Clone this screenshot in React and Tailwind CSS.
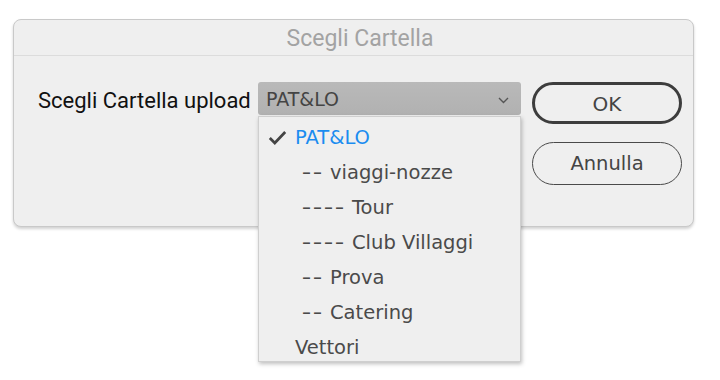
import React from "react";

const items = [
  { dash: "", text: "PAT&LO", selected: true },
  { dash: "--", text: "viaggi-nozze" },
  { dash: "----", text: "Tour" },
  { dash: "----", text: "Club Villaggi" },
  { dash: "--", text: "Prova" },
  { dash: "--", text: "Catering" },
  { dash: "", text: "Vettori" },
];

const lucida = { fontFamily: '"DejaVu Sans", "Liberation Sans", sans-serif' };
const myriad = { fontFamily: 'Roboto, "Liberation Sans", sans-serif' };

export default function App() {
  return (
    <div className="w-[720px] h-[380px] bg-white pt-[19px] pl-[13px] overflow-hidden">
      <div className="w-[681px] h-[208px] rounded-[8px] border border-[#c9c9c9] bg-[#efefef] shadow-[0_2px_3px_rgba(0,0,0,0.18)] flex flex-col">
        <div
          className="h-[36px] border-b border-[#dcdcdc] flex items-center justify-center pl-[13px] pt-[4px] text-[23px] text-[#a3a3a3]"
          style={myriad}
        >
          Scegli Cartella
        </div>
        <div className="flex items-start pt-[26px] pl-[24px]">
          <div
            className="h-[33px] flex items-center pt-[3px] text-[22px] text-[#111] w-[220px] whitespace-nowrap"
            style={myriad}
          >
            Scegli Cartella upload
          </div>
          <div className="relative">
            <div
              className="w-[263px] h-[33px] rounded-[3px] bg-gradient-to-b from-[#b9b9b9] to-[#b1b1b1] flex items-center justify-between pl-[8px] pr-[12px] pt-[2px] text-[19px] text-[#444]"
              style={lucida}
            >
              <span>PAT&amp;LO</span>
              <svg width="11" height="7" viewBox="0 0 11 7" className="mt-[1px]">
                <path d="M1 1 L5.5 5.5 L10 1" fill="none" stroke="#555" strokeWidth="1.4" />
              </svg>
            </div>
            <div
              className="absolute left-0 top-[34px] w-[263px] h-[246px] bg-[#efefef] border border-[#cfcfcf] shadow-[1px_2px_4px_rgba(0,0,0,0.25)] pt-[3px] z-10"
              style={lucida}
            >
              {items.map((it, i) => (
                <div key={i} className="h-[35px] flex items-center text-[19.5px] text-[#4a4a4a] whitespace-nowrap">
                  <div className="w-[36px] flex justify-center shrink-0 pl-[1px]">
                    {it.selected && (
                      <svg width="19" height="15" viewBox="0 0 19 15">
                        <path d="M1.8 8 L6.8 13 L17.2 2" fill="none" stroke="#444" strokeWidth="2.7" />
                      </svg>
                    )}
                  </div>
                  {it.dash && (
                    <span className="ml-[6px] mr-[7px] flex">
                      {it.dash.split("").map((d, j) => (
                        <span key={j} className="inline-block w-[11px] text-center scale-x-[1.35]">
                          {d}
                        </span>
                      ))}
                    </span>
                  )}
                  <span className={it.selected ? "text-[#1a8cf0]" : ""}>{it.text}</span>
                </div>
              ))}
            </div>
          </div>
          <div className="ml-[11px] flex flex-col gap-[18px]" style={lucida}>
            <button className="w-[150px] h-[42px] rounded-full border-[3px] border-[#3d3d3d] flex items-center justify-center pt-[1px] text-[20px] text-[#444]">
              OK
            </button>
            <button className="w-[150px] h-[43px] rounded-full border-[1.5px] border-[#4a4a4a] flex items-center justify-center pt-[1px] text-[19.5px] text-[#444]">
              Annulla
            </button>
          </div>
        </div>
      </div>
    </div>
  );
}
